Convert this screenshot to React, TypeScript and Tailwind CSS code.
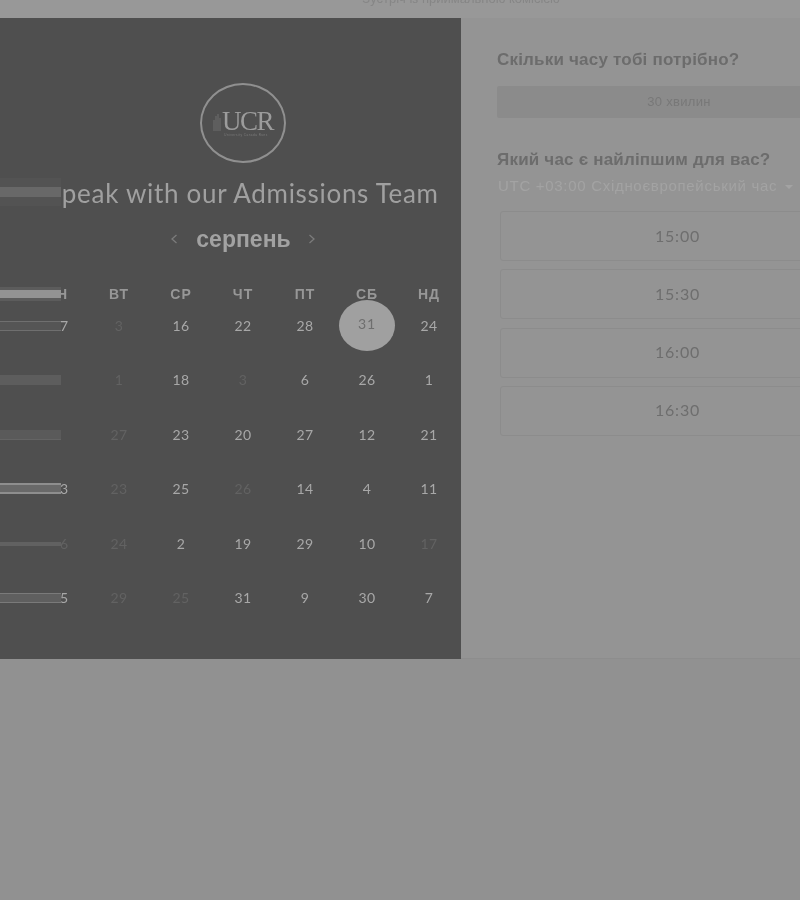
const days = ["ПН", "ВТ", "СР", "ЧТ", "ПТ", "СБ", "НД"];

// d = day, m = muted (other month), s = selected
const rows = [
  [{ d: "17" }, { d: "3", m: true }, { d: "16" }, { d: "22" }, { d: "28" }, { d: "31", s: true }, { d: "24" }],
  [{ d: "8" }, { d: "1", m: true }, { d: "18" }, { d: "3", m: true }, { d: "6" }, { d: "26" }, { d: "1" }],
  [{ d: "5" }, { d: "27", m: true }, { d: "23" }, { d: "20" }, { d: "27" }, { d: "12" }, { d: "21" }],
  [{ d: "13" }, { d: "23", m: true }, { d: "25" }, { d: "26", m: true }, { d: "14" }, { d: "4" }, { d: "11" }],
  [{ d: "16", m: true }, { d: "24", m: true }, { d: "2" }, { d: "19" }, { d: "29" }, { d: "10" }, { d: "17", m: true }],
  [{ d: "15" }, { d: "29", m: true }, { d: "25", m: true }, { d: "31" }, { d: "9" }, { d: "30" }, { d: "7" }],
];

// the striped glitch bars that cover the first column
const stripes = [
  "top-[21px] h-[10px] border-y border-[#6f6f6f] bg-[#555555]",
  "top-[21px] h-[10px] bg-[#5d5d5d]",
  "top-[21px] h-[10px] border-b border-[#646464] bg-[#5a5a5a]",
  "top-[20px] h-[11px] border-y-2 border-[#8e8e8e] bg-[#696969]",
  "top-[21px] h-[10px] border-y-[3px] border-[#4f4f4f] bg-[#616161]",
  "top-[21px] h-[10px] border-y border-[#7a7a7a] bg-[#5f5f5f]",
];

const times = ["15:00", "15:30", "16:00", "16:30"];

function Logo() {
  return (
    <div className="flex h-[80px] w-[86px] flex-col items-center justify-center rounded-[50%] border-2 border-[#909090]">
      <div className="mt-[2px] flex items-end">
        <svg width="9" height="19" viewBox="0 0 9 19">
          <path d="M1 19V8M3 19V4M5 19V2M7 19V6" stroke="#696969" strokeWidth="1.2" fill="none" />
        </svg>
        <span className="font-['Liberation_Serif',serif] text-[27px] leading-[20px] tracking-[-1.5px] text-[#9c9c9c]">UCR</span>
      </div>
      <span className="ml-[6px] mt-[2px] whitespace-nowrap font-['Liberation_Sans',sans-serif] text-[3px] leading-[4px] tracking-[0.5px] text-[#7d7d7d]">
        University Canada Runs
      </span>
    </div>
  );
}

function Calendar() {
  return (
    <div className="flex h-[641px] w-[461px] shrink-0 flex-col items-center bg-[#4f4f4f] pl-[26px] pr-[1px] pt-[65px]">
      <Logo />
      <div className="relative mt-[12px] w-full whitespace-nowrap text-center font-['Lato',sans-serif] text-[26px] leading-[36px] tracking-[0.7px] text-[#a0a0a0]">
        Speak with our Admissions Team
        <div className="absolute left-[-26px] top-[3px] h-[28px] w-[61px] border-y-[9px] border-[#535353] bg-[#686868]" />
      </div>
      <div className="mt-[13px] flex h-[30px] items-center font-['Liberation_Sans',sans-serif] text-[#a2a2a2]">
        <svg width="8" height="12" viewBox="0 0 8 12" className="mr-[18px]">
          <path d="M6.5 2 2 6l4.5 4" stroke="#7c7c7c" strokeWidth="1.3" fill="none" />
        </svg>
        <span className="text-[23px] font-bold leading-[30px]">серпень</span>
        <svg width="8" height="12" viewBox="0 0 8 12" className="ml-[17px]">
          <path d="M1.5 2 6 6l-4.5 4" stroke="#7c7c7c" strokeWidth="1.3" fill="none" />
        </svg>
      </div>
      <div className="mt-[30px] grid w-full grid-cols-7 font-['Liberation_Sans',sans-serif] text-[14px] font-bold leading-[20px] tracking-[1px] text-[#979797]">
        {days.map((d, i) => (
          <div key={d} className="relative text-center">
            {d}
            {i === 0 && <div className="absolute left-[-26px] top-[3px] h-[14px] w-[61px] border-y-[3px] border-[#5c5c5c] bg-[#939393]" />}
          </div>
        ))}
      </div>
      <div className="mt-[-4px] grid w-full grid-cols-7 grid-rows-6 font-['Lato',sans-serif] text-[14px]">
        {rows.map((row, i) =>
          row.map((c, j) => (
            <div key={`${i}-${j}`} className="relative flex h-[54.4px] items-start justify-center">
              {c.s ? (
                <span className="absolute left-[3px] top-0 flex h-[51px] w-[56px] items-start justify-center rounded-[50%] bg-[#a0a0a0] pt-[14px] leading-[20px] tracking-[1px] text-[#6e6e6e]">
                  {c.d}
                </span>
              ) : (
                <span className={`mt-[16px] leading-[20px] tracking-[0.5px] ${j === 0 && c.d.length === 2 ? "ml-[6px]" : ""} ${c.m ? "text-[#626262]" : "text-[#a8a8a8]"}`}>
                  {c.d}
                </span>
              )}
              {j === 0 && <div className={`absolute left-[-26px] w-[61px] ${stripes[i]}`} />}
            </div>
          ))
        )}
      </div>
    </div>
  );
}

function Sidebar() {
  return (
    <div className="h-[641px] w-[400px] shrink-0 border-b border-[#8d8d8d] bg-[#949494] pl-[36px] pt-[30px] font-['Liberation_Sans',sans-serif]">
      <h2 className="text-[17px] font-bold leading-[24px] tracking-[0.2px] text-[#6c6c6c]">Скільки часу тобі потрібно?</h2>
      <div className="mt-[14px] flex h-[32px] w-[364px] items-center justify-center rounded-[2px] bg-[#8b8b8b] text-[13px] tracking-[0.3px] text-[#787878]">
        30 хвилин
      </div>
      <h2 className="mt-[30px] text-[17px] font-bold leading-[24px] tracking-[0.2px] text-[#6c6c6c]">Який час є найліпшим для вас?</h2>
      <div className="ml-[1px] mt-[2px] flex items-center text-[15px] leading-[24px] tracking-[0.7px] text-[#a3a3a3]">
        UTC +03:00 Східноєвропейський час
        <span className="ml-[8px] mt-[2px] h-0 w-0 border-x-[4px] border-t-[4px] border-x-transparent border-t-[#a3a3a3]" />
      </div>
      <div className="ml-[3px] mt-[13px] flex w-[355px] flex-col gap-[8.3px]">
        {times.map((t) => (
          <div key={t} className="flex h-[50px] items-center justify-center rounded-[3px] border border-[#8c8c8c] pb-[1px] font-['Lato',sans-serif] text-[16px] tracking-[0.8px] text-[#6e6e6e]">
            {t}
          </div>
        ))}
      </div>
    </div>
  );
}

export default function App() {
  return (
    <div className="h-[900px] w-[800px] overflow-hidden bg-[#919191] blur-[0.4px]">
      <div className="flex h-[18px] justify-center overflow-hidden bg-[#989898]">
        <span className="ml-[122px] mt-[-9px] font-['Liberation_Sans',sans-serif] text-[13px] leading-[16px] text-[#868686]">
          Зустріч із приймальною комісією
        </span>
      </div>
      <div className="flex">
        <Calendar />
        <Sidebar />
      </div>
    </div>
  );
}
